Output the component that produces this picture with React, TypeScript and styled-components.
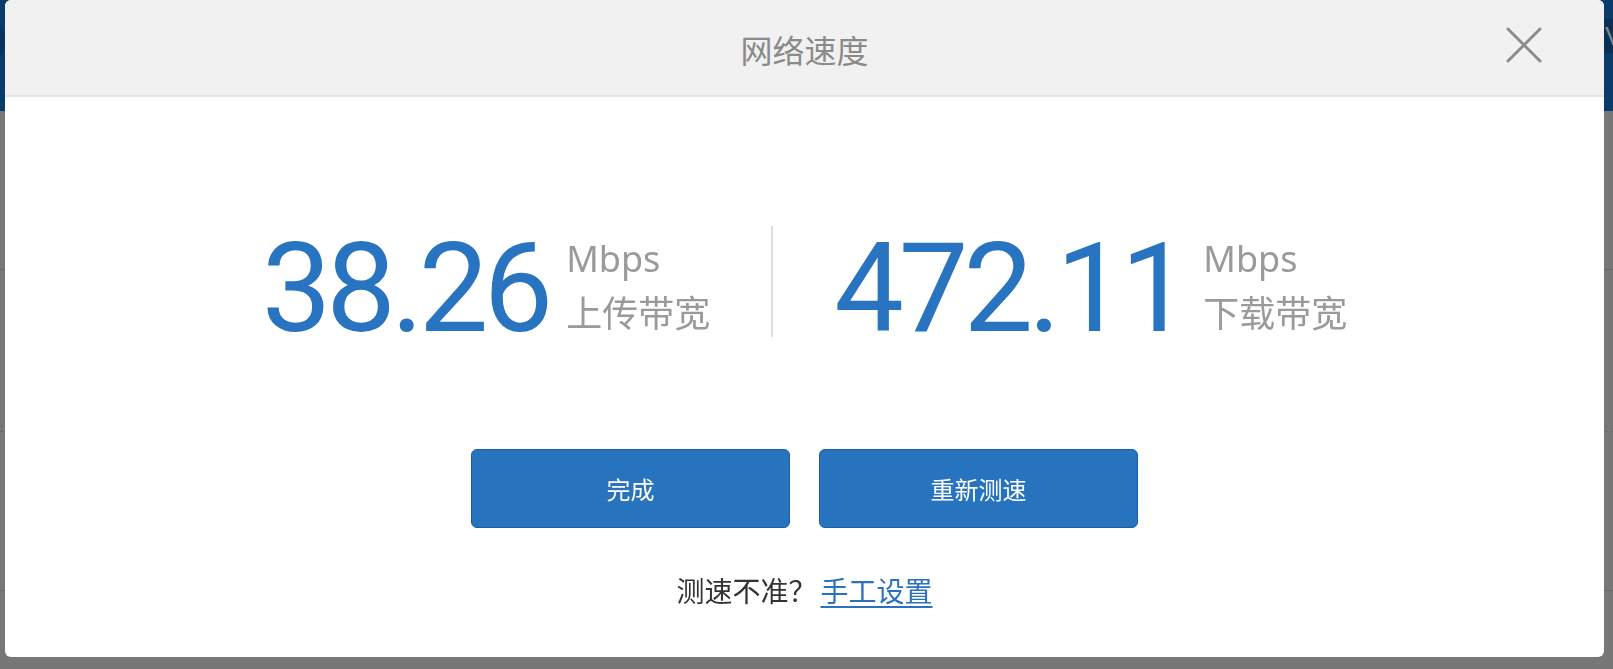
import React from "react";
import styled, { createGlobalStyle } from "styled-components";

const Global = createGlobalStyle`
  html, body { margin: 0; padding: 0; overflow: hidden; background: #777777; }
  body { font-family: "Noto Sans", "Noto Sans CJK SC", sans-serif; }
`;

const Page = styled.div`
  width: 1613px;
  height: 669px;
  display: flex;
  flex-direction: column;
  background: #777777;
`;

const PageHeader = styled.div`
  height: 111px;
  background: #093c6b;
  display: flex;
  align-items: center;
  justify-content: space-between;
  overflow: hidden;
`;

const Avatar = styled.div`
  width: 36px;
  height: 36px;
  border-radius: 50%;
  background: #07335c;
  margin-left: -29px;
  margin-top: -30px;
`;

const NavBand = styled.div`
  width: 200px;
  height: 34px;
  margin-top: -40px;
  background: #0a3056;
  color: #7d8794;
  font-family: "Liberation Sans", sans-serif;
  font-size: 26px;
  line-height: 34px;
  padding-left: 192px;
  box-sizing: content-box;
  margin-right: -192px;
`;

const Row = styled.div<{ $h: number; $dotted?: boolean }>`
  height: ${(p) => p.$h}px;
  border-bottom: 1px ${(p) => (p.$dotted ? "dashed" : "solid")} #686868;
  flex-shrink: 0;
`;

const Modal = styled.div`
  position: fixed;
  top: 0;
  left: 5px;
  width: 1599px;
  height: 657px;
  background: #ffffff;
  border-radius: 6px;
  overflow: hidden;
  display: flex;
  flex-direction: column;
`;

const Header = styled.div`
  position: relative;
  height: 95px;
  flex-shrink: 0;
  background: #f1f1f1;
  border-bottom: 2px solid #e5e5e5;
  display: flex;
  align-items: center;
  justify-content: center;
`;

const Title = styled.div`
  font-family: "Noto Sans CJK SC", sans-serif;
  font-size: 32px;
  color: #8a8a8a;
  margin-top: 2px;
`;

const Close = styled.button`
  position: absolute;
  right: 62px;
  top: 27px;
  width: 36px;
  height: 36px;
  padding: 0;
  border: 0;
  background: transparent;
  cursor: pointer;
  display: flex;
`;

const Body = styled.div`
  display: flex;
  flex-direction: column;
  align-items: center;
  padding-top: 129px;
`;

const Stats = styled.div`
  display: flex;
  align-items: flex-start;
  justify-content: center;
`;

const Stat = styled.div`
  display: flex;
  align-items: flex-start;
  gap: 18px;
`;

const Value = styled.div`
  font-family: Roboto, "Liberation Sans", sans-serif;
  font-size: 124px;
  line-height: 124px;
  letter-spacing: -5px;
  color: #2874c0;
  margin-top: 1px;
`;

const Labels = styled.div`
  display: flex;
  flex-direction: column;
  color: #9a9a9a;
  font-size: 36px;
  margin-top: 7px;
`;

const Unit = styled.div`
  font-family: "Noto Sans", sans-serif;
  line-height: 52px;
`;

const Caption = styled.div`
  font-family: "Noto Sans CJK SC", sans-serif;
  line-height: 52px;
`;

const Divider = styled.div`
  width: 2px;
  height: 111px;
  background: #dedede;
  margin: 0 61px;
`;

const Actions = styled.div`
  display: flex;
  gap: 29px;
  margin-top: 98px;
`;

const Button = styled.button`
  width: 319px;
  height: 79px;
  box-sizing: border-box;
  border: 1px solid #1a5da6;
  border-radius: 6px;
  background: #2773be;
  color: #ffffff;
  font-family: "Noto Sans CJK SC", sans-serif;
  font-size: 24px;
  cursor: pointer;
`;

const Hint = styled.div`
  margin-top: 42px;
  font-family: "Noto Sans CJK SC", sans-serif;
  font-size: 28px;
  color: #333333;
  display: flex;
  align-items: baseline;
`;

const Link = styled.a`
  color: #2a72bf;
  text-decoration: underline;
  text-underline-offset: 4px;
  margin-left: 4px;
  cursor: pointer;
`;

function StatBlock({ value, caption }: { value: string; caption: string }) {
  return (
    <Stat>
      <Value>{value}</Value>
      <Labels>
        <Unit>Mbps</Unit>
        <Caption>{caption}</Caption>
      </Labels>
    </Stat>
  );
}

export default function App() {
  return (
    <>
      <Global />
      <Page>
        <PageHeader>
          <Avatar />
          <NavBand>V</NavBand>
        </PageHeader>
        <Row $h={158} />
        <Row $h={161} $dotted />
        <Row $h={158} />
      </Page>
      <Modal>
        <Header>
          <Title>网络速度</Title>
          <Close aria-label="关闭">
            <svg width="36" height="36" viewBox="0 0 36 36">
              <path d="M2 2 L34 34 M34 2 L2 34" stroke="#8c8c8c" strokeWidth="3" strokeLinecap="round" fill="none" />
            </svg>
          </Close>
        </Header>
        <Body>
          <Stats>
            <StatBlock value="38.26" caption="上传带宽" />
            <Divider />
            <StatBlock value="472.11" caption="下载带宽" />
          </Stats>
          <Actions>
            <Button>完成</Button>
            <Button>重新测速</Button>
          </Actions>
          <Hint>
            测速不准？<Link>手工设置</Link>
          </Hint>
        </Body>
      </Modal>
    </>
  );
}
